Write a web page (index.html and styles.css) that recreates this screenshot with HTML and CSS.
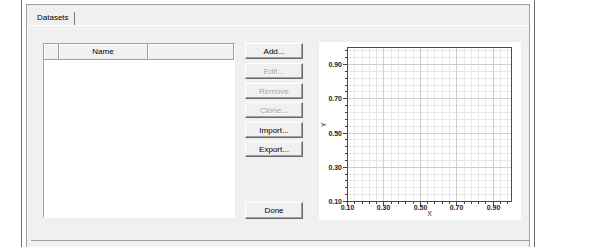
FILE: index.html
```html
<!DOCTYPE html>
<html lang="en">
<head>
    <meta charset="UTF-8">
    <title>Datasets</title>
    <link rel="stylesheet" href="styles.css">
</head>
<body>
    <div class="window">
        <div class="tabs">
            <div class="tabstrip">
                <div class="tab">Datasets</div>
            </div>
            <div class="page">
                <div class="content">
                    <div class="list">
                        <div class="list-head">
                            <div class="col col-mark"></div>
                            <div class="col col-name">Name</div>
                            <div class="col col-rest"></div>
                        </div>
                    </div>

                    <div class="buttons">
                        <button class="btn btn-add">Add...</button>
                        <button class="btn btn-edit" disabled>Edit...</button>
                        <button class="btn btn-remove" disabled>Remove</button>
                        <button class="btn btn-clone" disabled>Clone...</button>
                        <button class="btn btn-import">Import...</button>
                        <button class="btn btn-export">Export...</button>
                        <button class="btn btn-done">Done</button>
                    </div>

                    <div class="plot">
                        <svg class="chart" width="202" height="178" viewBox="0 0 202 178">
                            <!-- minor grid, every 0.04 -->
                            <path class="grid-minor" d="M35.5 6V159M43.5 6V159M50.5 6V159M57.5 6V159M72.5 6V159M79.5 6V159M86.5 6V159M94.5 6V159M108.5 6V159M115.5 6V159M123.5 6V159M130.5 6V159M145.5 6V159M152.5 6V159M159.5 6V159M166.5 6V159M181.5 6V159M188.5 6V159M29 152.5H192M29 145.5H192M29 138.5H192M29 132.5H192M29 118.5H192M29 111.5H192M29 104.5H192M29 97.5H192M29 84.5H192M29 77.5H192M29 70.5H192M29 63.5H192M29 49.5H192M29 43.5H192M29 36.5H192M29 29.5H192M29 15.5H192M29 8.5H192"/>
                            <!-- major grid, every 0.2 -->
                            <path class="grid-major" d="M64.5 6V159M101.5 6V159M137.5 6V159M174.5 6V159M29 125.5H192M29 91.5H192M29 56.5H192M29 22.5H192"/>
                            <path class="ticks" d="M24 159.5H28M24 125.5H28M24 91.5H28M24 56.5H28M24 22.5H28M26 152.5H28M26 145.5H28M26 138.5H28M26 132.5H28M26 118.5H28M26 111.5H28M26 104.5H28M26 97.5H28M26 84.5H28M26 77.5H28M26 70.5H28M26 63.5H28M26 49.5H28M26 43.5H28M26 36.5H28M26 29.5H28M26 15.5H28M26 8.5H28M28.5 160V164M64.5 160V164M101.5 160V164M137.5 160V164M174.5 160V164M35.5 160V162M43.5 160V162M50.5 160V162M57.5 160V162M72.5 160V162M79.5 160V162M86.5 160V162M94.5 160V162M108.5 160V162M115.5 160V162M123.5 160V162M130.5 160V162M145.5 160V162M152.5 160V162M159.5 160V162M166.5 160V162M181.5 160V162M188.5 160V162"/>
                            <path class="frame" d="M28.5 5.5H192.5V159.5H28.5Z"/>

                            <text class="tick-y" x="23" y="162">0.10</text>
                            <text class="tick-y" x="23" y="128">0.30</text>
                            <text class="tick-y" x="23" y="94">0.50</text>
                            <text class="tick-y" x="23" y="59">0.70</text>
                            <text class="tick-y" x="23" y="25">0.90</text>

                            <text class="tick-x" x="28.5" y="168">0.10</text>
                            <text class="tick-x" x="64.5" y="168">0.30</text>
                            <text class="tick-x" x="101.5" y="168">0.50</text>
                            <text class="tick-x" x="137.5" y="168">0.70</text>
                            <text class="tick-x" x="174.5" y="168">0.90</text>

                            <text class="axis-title" x="110.5" y="174">X</text>
                            <text class="axis-title" transform="translate(7 83) rotate(-90)">Y</text>
                        </svg>
                    </div>
                </div>
            </div>
            <div class="footer"></div>
        </div>
    </div>
</body>
</html>
```

FILE: styles.css
```css
body {
    margin: 0;
    background: #fff;
    font-family: 'Liberation Sans', Arial, sans-serif;
    font-size: 8px;
    color: #000;
}
.window {
    margin-left: 21px;
    width: 504px;
    height: 243px;
    padding: 4px 4px 0;
    border-left: 1px solid #6f6f6f;
    border-right: 1px solid #6f6f6f;
    background: #fff;
}
.tabs {
    height: 242px;
    background: #f0f0f0;
    border: 1px solid #a0a0a0;
    border-bottom: none;
}
.tabstrip {
    height: 20px;
    display: flex;
    align-items: flex-end;
}
.tab {
    width: 48px;
    height: 13px;
    line-height: 12px;
    padding-left: 10px;
    box-sizing: border-box;
    border-right: 1px solid #7a7a7a;
}
.page {
    height: 214px;
    border-top: 1px solid #fff;
    border-left: 1px solid #fff;
}
.content {
    display: flex;
    align-items: flex-start;
    padding: 17px 0 0 15px;
}
.list {
    width: 190px;
    height: 173px;
    background: #fff;
    border: 1px solid;
    border-color: #a0a0a0 #fff #fff #a0a0a0;
}
.list-head {
    display: flex;
    height: 15px;
    border-bottom: 1px solid #a0a0a0;
}
.col {
    background: #f0f0f0;
    border-right: 1px solid #a0a0a0;
    box-shadow: inset 1px 1px #fff;
    text-align: center;
    line-height: 15px;
}
.col-mark {
    width: 14px;
}
.col-name {
    width: 88px;
}
.col-rest {
    flex: 1;
}
.buttons {
    display: flex;
    flex-direction: column;
    width: 58px;
    height: 176px;
    margin-left: 10px;
}
.btn {
    height: 16px;
    padding: 0;
    font: inherit;
    color: #000;
    background: #f0f0f0;
    border: 1px solid;
    border-color: #fff #696969 #696969 #fff;
    box-shadow: inset -1px -1px #a0a0a0;
}
.btn:disabled {
    color: #a0a0a0;
    text-shadow: 1px 1px 0 #fff;
}
.btn-add, .btn-edit, .btn-clone {
    margin-bottom: 4px;
}
.btn-remove, .btn-import {
    margin-bottom: 3px;
}
.btn-done {
    height: 17px;
    margin-top: auto;
}
.plot {
    width: 202px;
    height: 178px;
    margin: -1px 0 0 16px;
    background: #fff;
}
.chart {
    display: block;
    shape-rendering: crispEdges;
}
.chart path {
    fill: none;
}
.grid-minor {
    stroke: #e8e8e8;
}
.grid-major {
    stroke: #cfcfcf;
}
.ticks {
    stroke: #444;
}
.frame {
    stroke: #4a4a4a;
}
.chart text {
    font-family: 'Liberation Sans', Arial, sans-serif;
    fill: #222;
}
.tick-y, .tick-x {
    font-size: 7px;
    font-weight: bold;
}
.tick-y {
    text-anchor: end;
}
.tick-x, .axis-title {
    text-anchor: middle;
}
.axis-title {
    font-size: 7px;
}
.footer {
    height: 5px;
    margin-left: 4px;
    border-top: 1px solid #a0a0a0;
}
```
